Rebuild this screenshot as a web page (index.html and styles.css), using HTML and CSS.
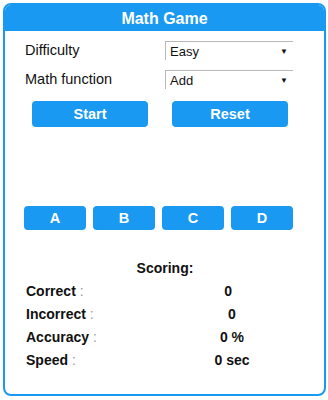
FILE: index.html
```html
<!DOCTYPE html>
<html>
<head>
<meta charset="utf-8">
<link rel="stylesheet" href="styles.css">
</head>
<body>
<div class="card">
  <div class="header">Math Game</div>
  <div class="body">
    <div class="row">
      <span class="label">Difficulty</span>
      <div class="select"><span>Easy</span><span class="arrow">▼</span></div>
    </div>
    <div class="row r2">
      <span class="label">Math function</span>
      <div class="select"><span>Add</span><span class="arrow">▼</span></div>
    </div>
    <div class="actions">
      <div class="btn big">Start</div>
      <div class="btn big">Reset</div>
    </div>
    <div class="answers">
      <div class="btn ans">A</div>
      <div class="btn ans">B</div>
      <div class="btn ans">C</div>
      <div class="btn ans">D</div>
    </div>
    <div class="scoring-title">Scoring:</div>
    <div class="scores">
      <div class="sl">Correct <span class="colon">:</span></div><div class="sv">0&nbsp;&nbsp;</div>
      <div class="sl">Incorrect <span class="colon">:</span></div><div class="sv">0</div>
      <div class="sl">Accuracy <span class="colon">:</span></div><div class="sv">0 %</div>
      <div class="sl">Speed <span class="colon">:</span></div><div class="sv">0 sec</div>
    </div>
  </div>
</div>
</body>
</html>
```
FILE: styles.css
```css
html, body { margin: 0; padding: 0; background: #fff; }
body {
  font-family: "Liberation Sans", Arial, sans-serif;
  color: #111;
  padding: 3px 2px 0 3px;
}
.card {
  width: 319px;
  height: 389px;
  border: 2px solid #1999f2;
  border-radius: 8px;
  overflow: hidden;
  box-sizing: content-box;
}
.header {
  background: #1999f2;
  color: #fff;
  font-weight: bold;
  font-size: 16px;
  height: 26px;
  line-height: 27px;
  text-align: center;
}
.body {
  display: flex;
  flex-direction: column;
  align-items: flex-start;
  padding: 9px 0 0 20px;
}
.row {
  display: flex;
  align-items: center;
  height: 20px;
}
.r2 { margin-top: 9px; }
.label { font-size: 14.5px; width: 140px; }
.select {
  height: 19px;
  border-top: 1px solid #b8b8b8;
  border-left: 1px solid #b8b8b8;
  display: flex;
  align-items: center;
  justify-content: space-between;
  font-size: 13px;
  padding: 1px 5px 0 4px;
  box-sizing: border-box;
  width: 128px;
}
.arrow { font-size: 8px; }
.actions {
  display: flex;
  gap: 24px;
  padding-left: 7px;
  margin-top: 12px;
}
.btn {
  background: #1999f2;
  color: #fff;
  font-weight: bold;
  font-size: 14.5px;
  border-radius: 4px;
  display: flex;
  align-items: center;
  justify-content: center;
}
.big { width: 116px; height: 26px; }
.answers {
  display: flex;
  gap: 7px;
  margin-top: 79px;
  margin-left: -1px;
}
.ans { width: 62px; height: 24px; }
.scoring-title {
  text-align: center;
  font-weight: bold;
  font-size: 14px;
  line-height: 16px;
  margin-top: 30px;
  width: 280px;
}
.scores {
  display: grid;
  grid-template-columns: 140px 132px;
  grid-auto-rows: 23px;
  margin-top: 3px;
  margin-left: 1px;
  font-size: 14px;
  font-weight: bold;
  align-items: center;
}
.colon { font-weight: normal; color: #999; }
.sv { text-align: center; }
```
